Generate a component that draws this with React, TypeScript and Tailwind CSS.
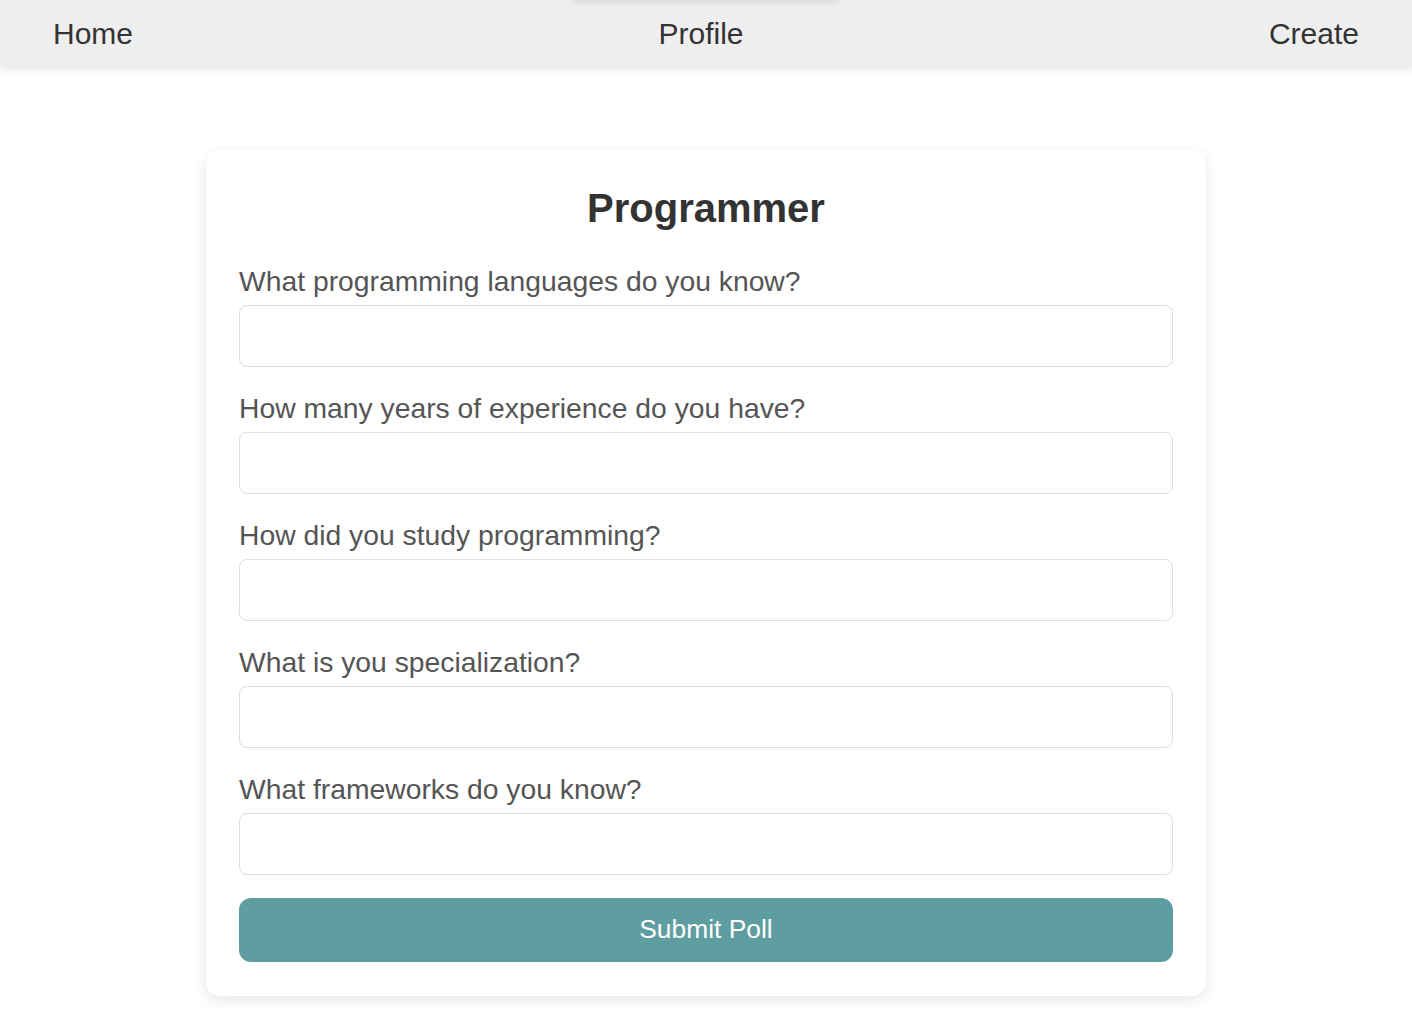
const QUESTIONS = [
  'What programming languages do you know?',
  'How many years of experience do you have?',
  'How did you study programming?',
  'What is you specialization?',
  'What frameworks do you know?',
];

function NavBar() {
  return (
    <nav className="relative flex h-[67px] items-center justify-between bg-[#eeeeee] px-[53px] shadow-[0_2px_8px_rgba(0,0,0,0.12)]">
      {/* faint shadow of something sitting above the viewport */}
      <div className="absolute left-[570px] top-[-24px] h-[24px] w-[272px] rounded-lg bg-[#eeeeee] shadow-[0_2px_6px_rgba(0,0,0,0.1)]" />
      <a className="text-[30px] leading-[34px] text-[#333333]">Home</a>
      <a className="text-[30px] leading-[34px] text-[#333333]">Profile</a>
      <a className="text-[30px] leading-[34px] text-[#333333]">Create</a>
    </nav>
  );
}

function PollForm() {
  return (
    <form
      className="mx-auto flex w-[1000px] flex-col rounded-[14px] bg-white px-[33px] pb-[34px] pt-[35px] shadow-[0_4px_14px_rgba(0,0,0,0.1)]"
      onSubmit={(e) => e.preventDefault()}
    >
      <h2 className="mb-[34px] text-center text-[40px] font-bold leading-[46px] text-[#333333]">
        Programmer
      </h2>

      <div className="flex flex-col gap-[25px]">
        {QUESTIONS.map((q) => (
          <div key={q} className="flex flex-col">
            <label className="mb-[8px] block text-[28.3px] leading-[32px] text-[#555555]">{q}</label>
            <input
              type="text"
              className="h-[62px] w-full rounded-[8px] border border-[#dddddd] px-3 text-[24px] outline-none"
            />
          </div>
        ))}
      </div>

      <button
        type="submit"
        className="mt-[23px] h-[64px] w-full rounded-[12px] bg-[#5f9ea0] text-[26.4px] text-white"
      >
        Submit Poll
      </button>
    </form>
  );
}

export default function App() {
  return (
    <div className="min-h-screen bg-white font-['Liberation_Sans',Arial,sans-serif]">
      <NavBar />
      <main className="pb-10 pt-[83px]">
        <PollForm />
      </main>
    </div>
  );
}
